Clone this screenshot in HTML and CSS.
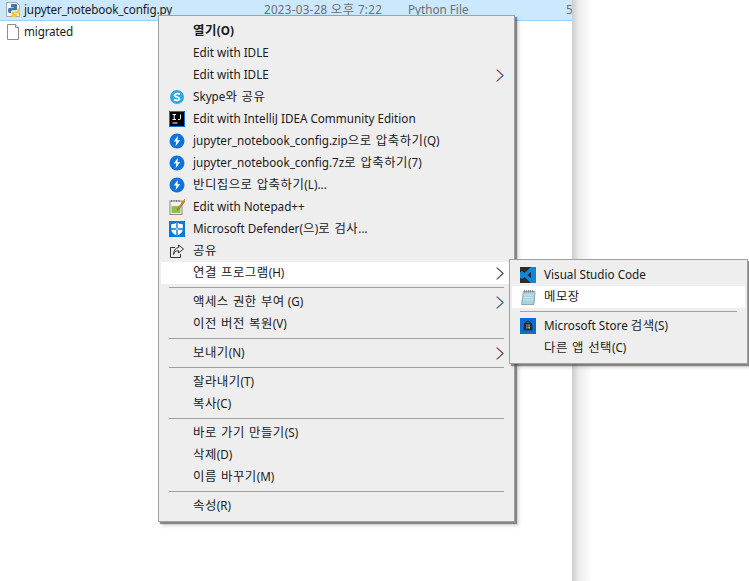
FILE: index.html
```html
<!DOCTYPE html>
<html lang="ko">
<head>
<meta charset="utf-8">
<title>Context menu</title>
<link rel="stylesheet" href="styles.css">
</head>
<body>
<div class="desktop">
  <main class="files">
    <div class="file selected">
      <svg class="ficon" viewBox="0 0 16 16"><path d="M1.500.5h10l3 3v11h-13z" fill="#f4f4f4" stroke="#a8a8a8"/><path d="M7 2h3.500c1 0 1.500.6 1.500 1.500V7c0 .8-.6 1.300-1.400 1.300H7.500C6.300 8.300 6 9 6 10v1H4.600C3.600 11 3 10.200 3 8.500S3.600 6 4.600 6H9v-.6H6V3.500C6 2.500 6.200 2 7 2z" fill="#3a78ac"/><path d="M12.300 6.500H13.500c1 0 1.500 1 1.500 2.500s-.5 2.500-1.500 2.500H9v.6h3V13.500c0 1-.8 1.500-2 1.500H8c-1 0-1.500-.6-1.500-1.500V11c0-.8.6-1.300 1.400-1.300h2.700c1 0 1.700-.6 1.700-1.700z" fill="#f2c83c"/></svg>
      <span class="fname">jupyter_notebook_config.py</span>
      <span class="fdate">2023-03-28 <span class="ko">오후</span> 7:22</span>
      <span class="ftype">Python File</span>
      <span class="fsize">5</span>
    </div>
    <div class="file">
      <svg class="ficon" viewBox="0 0 16 16"><path d="M2.500.5h8l3 3v12h-11z" fill="#fff" stroke="#8c8c8c"/><path d="M10.500.5v3h3" fill="#f0f0f0" stroke="#8c8c8c"/></svg>
      <span class="fname">migrated</span>
    </div>
  </main>
  <div class="edge"></div>

  <nav class="menu main-menu">
    <div class="item strong"><span class="ic"></span><span class="t"><span class="ko">열기</span>(O)</span></div>
    <div class="item"><span class="ic"></span><span class="t">Edit with IDLE</span></div>
    <div class="item"><span class="ic"></span><span class="t">Edit with IDLE</span><svg class="arrow warm" viewBox="0 0 8 13"><use href="#chevron"/></svg></div>
    <div class="item"><span class="ic"><svg viewBox="0 0 16 16"><circle cx="8" cy="8" r="7" fill="#2aa8e6"/><path d="M11 5.300C10 4.400 6 4 5.500 6.200 5.100 8.400 10.800 7.600 10.500 10c-.4 2-4.300 1.600-5.500.5" fill="none" stroke="#fff" stroke-width="1.700"/></svg></span><span class="t">Skype<span class="ko">와 공유</span></span></div>
    <div class="item"><span class="ic"><svg viewBox="0 0 16 16"><rect x=".5" y=".5" width="15" height="15" fill="#000" stroke="#1d6fe0"/><path d="M3.500 3.500h3.500M5.200 3.500v5M3.500 8.500h3.500M11.500 3.500v4.200c0 .8-.8 1-2.500.8M3.500 12h5" stroke="#fff" stroke-width="1" fill="none"/></svg></span><span class="t">Edit with IntelliJ IDEA Community Edition</span></div>
    <div class="item"><span class="ic"><svg viewBox="0 0 16 16"><use href="#bandizip"/></svg></span><span class="t">jupyter_notebook_config.zip<span class="ko">으로 압축하기</span>(Q)</span></div>
    <div class="item"><span class="ic"><svg viewBox="0 0 16 16"><use href="#bandizip"/></svg></span><span class="t">jupyter_notebook_config.7z<span class="ko">로 압축하기</span>(7)</span></div>
    <div class="item"><span class="ic"><svg viewBox="0 0 16 16"><use href="#bandizip"/></svg></span><span class="t"><span class="ko">반디집으로 압축하기</span>(L)...</span></div>
    <div class="item"><span class="ic"><svg viewBox="0 0 16 16"><rect x="1" y="2" width="12" height="13.500" fill="#f4f4ec" stroke="#8a8a80"/><path d="M2.500 1v2M5 1v2M7.500 1v2M10 1v2" stroke="#777"/><rect x="2.500" y="7" width="9" height="7" fill="#8bc34a"/><path d="M15.500.5l-6 8-1.500 2.500 2.500-1.500 6-8z" fill="#e8a020" stroke="#8a4b10" stroke-width=".6"/></svg></span><span class="t">Edit with Notepad++</span></div>
    <div class="item"><span class="ic"><svg viewBox="0 0 16 16"><rect width="16" height="16" fill="#0a78d4"/><path d="M8 1.500c1.800 1.100 3.700 1.600 5.800 1.700v5c0 3-2.400 5-5.800 6.500-3.400-1.500-5.800-3.500-5.800-6.500v-5C4.300 3.100 6.200 2.600 8 1.500z" fill="#fff"/><path d="M7.300 1.500v13.500h1.400V1.500zM2 7.300h12v1.400H2z" fill="#0a78d4"/></svg></span><span class="t">Microsoft Defender(<span class="ko">으</span>)<span class="ko">로 검사</span>...</span></div>
    <div class="item"><span class="ic"><svg viewBox="0 0 16 16" fill="none" stroke="#333"><path d="M6 4.500H1.500v10h10V11"/><path d="M9.500 2l5 4-5 4V7.800C7 7.600 5.200 9 4.500 11.500 4.500 7.500 6.500 5 9.500 4.500z"/></svg></span><span class="t ko">공유</span></div>
    <div class="item active"><span class="ic"></span><span class="t"><span class="ko">연결 프로그램</span>(H)</span><svg class="arrow" viewBox="0 0 8 13"><use href="#chevron"/></svg></div>
    <div class="sep"></div>
    <div class="item"><span class="ic"></span><span class="t"><span class="ko">액세스 권한 부여</span> (G)</span><svg class="arrow cool" viewBox="0 0 8 13"><use href="#chevron"/></svg></div>
    <div class="item"><span class="ic"></span><span class="t"><span class="ko">이전 버전 복원</span>(V)</span></div>
    <div class="sep"></div>
    <div class="item"><span class="ic"></span><span class="t"><span class="ko">보내기</span>(N)</span><svg class="arrow warm" viewBox="0 0 8 13"><use href="#chevron"/></svg></div>
    <div class="sep"></div>
    <div class="item"><span class="ic"></span><span class="t"><span class="ko">잘라내기</span>(T)</span></div>
    <div class="item"><span class="ic"></span><span class="t"><span class="ko">복사</span>(C)</span></div>
    <div class="sep"></div>
    <div class="item"><span class="ic"></span><span class="t"><span class="ko">바로 가기 만들기</span>(S)</span></div>
    <div class="item"><span class="ic"></span><span class="t"><span class="ko">삭제</span>(D)</span></div>
    <div class="item"><span class="ic"></span><span class="t"><span class="ko">이름 바꾸기</span>(M)</span></div>
    <div class="sep"></div>
    <div class="item"><span class="ic"></span><span class="t"><span class="ko">속성</span>(R)</span></div>
  </nav>

  <nav class="menu sub-menu">
    <div class="item"><span class="ic"><svg viewBox="0 0 16 16"><rect width="16" height="16" fill="#2b2b2b"/><path d="M11 0h5v16h-5L4.500 10 2 12 0 10.800V5.200L2 4l2.500 2zM11 4.800L7.500 8l3.500 3.200z" fill="#0e87d6"/></svg></span><span class="t">Visual Studio Code</span></div>
    <div class="item active"><span class="ic"><svg viewBox="0 0 16 16"><path d="M3.500 2.500h11.500l-1 13H1.500z" fill="#a9d3dc" stroke="#6d8f98" stroke-width=".7"/><path d="M4.500 1v2.500M6.500 1v2.500M8.500 1v2.500M10.500 1v2.500M12.500 1v2.500" stroke="#777" stroke-width=".8"/><path d="M3.800 6h9.500M3.600 8.500h9.500M3.300 11h9.500" stroke="#d6ecf0" stroke-width=".8"/></svg></span><span class="t ko">메모장</span></div>
    <div class="sep"></div>
    <div class="item"><span class="ic"><svg viewBox="0 0 16 16"><rect width="16" height="16" fill="#0a6ed1"/><path d="M4 5h8l.6 7.500H3.400z" fill="#1c2c4a"/><path d="M6 5V3.500h4V5" fill="none" stroke="#1c2c4a"/><rect x="6" y="6.500" width="1.800" height="1.800" fill="#f25022"/><rect x="8.200" y="6.500" width="1.800" height="1.800" fill="#7fba00"/><rect x="6" y="8.700" width="1.800" height="1.800" fill="#00a4ef"/><rect x="8.200" y="8.700" width="1.800" height="1.800" fill="#ffb900"/></svg></span><span class="t">Microsoft Store <span class="ko">검색</span>(S)</span></div>
    <div class="item"><span class="ic"></span><span class="t"><span class="ko">다른 앱 선택</span>(C)</span></div>
  </nav>
</div>
<svg class="defs" width="0" height="0"><defs>
  <g id="bandizip"><circle cx="8" cy="8" r="7.500" fill="#0f74d9"/><path d="M9 2.800L4.800 8.600h2.600L6.500 13.200l4.700-6H8.400z" fill="#fff"/></g>
  <g id="chevron"><path class="fringe-a" d="M.3.800l6.300 5.700L.3 12.200"/><path class="fringe-b" d="M1.300.8l6.300 5.700-6.300 5.700"/><path class="core" d="M.8.800l6.300 5.700L.8 12.200"/></g>
</defs></svg>
</body>
</html>
```

FILE: styles.css
```css
* { box-sizing: border-box; }
html, body { margin: 0; height: 100%; background: #fff; }
body { font-family: "Noto Sans", "Noto Sans CJK KR", sans-serif; font-size: 11.7px; color: #1a1a1a; overflow: hidden; }
.desktop { position: relative; display: flex; width: 749px; height: 581px; overflow: hidden; }
.files { width: 572px; flex: none; background: #fff; overflow: hidden; }
.edge { width: 20px; flex: none; background: linear-gradient(to right, #cdcdcd, #ececec 35%, #fff); }
.file { position: relative; display: flex; align-items: center; height: 21px; padding-left: 5px; gap: 3px; white-space: nowrap; }
.file + .file { height: 22px; }
.file > span { padding-bottom: 2px; }
.selected { background: #cce8ff; border-bottom: 1px solid #99d1ff; }
.ficon { width: 16px; height: 16px; flex: none; }
.fname { width: 237px; flex: none; letter-spacing: -.15px; }
.fdate, .ftype, .fsize { color: #6d6d6d; flex: none; }
.fdate { width: 141px; letter-spacing: .25px; }
.ftype { width: 155px; }
.menu { position: absolute; background: #eee; border: 1px solid #a0a0a0; padding: 4px 2px; box-shadow: 2px 2px 1px rgba(60, 60, 60, .55), 4px 4px 3px rgba(120, 120, 120, .25); white-space: nowrap; }
.main-menu { left: 158px; top: 15px; width: 357px; height: 507px; }
.sub-menu { left: 509px; top: 259px; width: 239px; height: 105px; }
.item { display: flex; align-items: center; height: 22px; padding: 0 8px; gap: 8px; }
.ic { display: block; width: 16px; height: 16px; flex: none; }
.ic svg { display: block; width: 16px; height: 16px; }
.t { padding-bottom: 2px; }
.ko { font-size: 12.4px; letter-spacing: .5px; word-spacing: .5px; }
.active { background: #fff; }
.strong { font-weight: 700; }
.sep { height: 1px; background: #a0a0a0; margin: 3px 8px; }
.arrow { width: 8px; height: 13px; margin-left: auto; flex: none; fill: none; stroke-width: 1; color: #4a3f4f; }
.fringe-a { stroke: #e08a3c; }
.fringe-b { stroke: #4a8fd0; }
.core { stroke: currentColor; stroke-width: .9; }
.warm { color: #a3291c; }
.cool { color: #1f62b0; }
.defs { position: absolute; }
```
